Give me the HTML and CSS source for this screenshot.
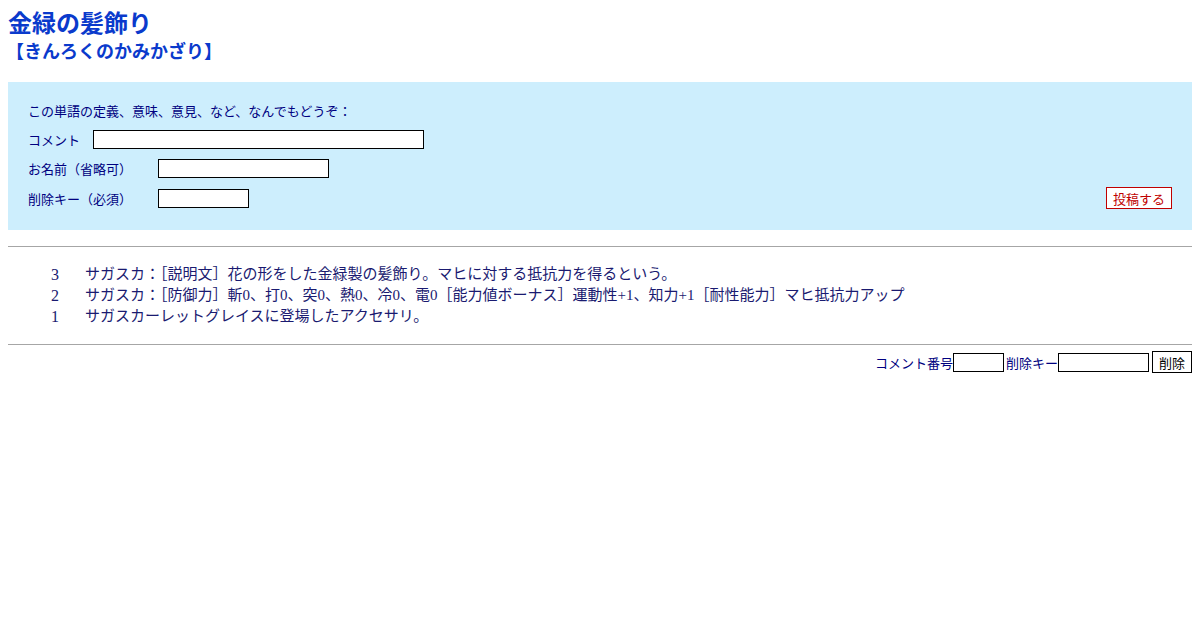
FILE: index.html
```html
<!DOCTYPE html>
<html lang="ja">
<head>
  <meta charset="UTF-8">
  <title>金緑の髪飾り</title>
  <link rel="stylesheet" href="styles.css">
</head>
<body>
  <h1 class="word">金緑の髪飾り</h1>
  <h2 class="yomi">【きんろくのかみかざり】</h2>

  <form class="post-box">
    <div class="post-lead">この単語の定義、意味、意見、など、なんでもどうぞ：</div>
    <div class="post-row">
      <label class="label-short">コメント</label>
      <input type="text" class="in-comment">
    </div>
    <div class="post-row">
      <label class="label">お名前（省略可）</label>
      <input type="text" class="in-name">
    </div>
    <div class="post-row post-last">
      <div class="post-row">
        <label class="label">削除キー（必須）</label>
        <input type="password" class="in-key">
      </div>
      <button type="button" class="btn-post">投稿する</button>
    </div>
  </form>

  <hr class="rule">

  <div class="comments">
    <div class="comment"><span class="num">3</span><span class="txt">サガスカ：［説明文］花の形をした金緑製の髪飾り。マヒに対する抵抗力を得るという。</span></div>
    <div class="comment"><span class="num">2</span><span class="txt">サガスカ：［防御力］斬0、打0、突0、熱0、冷0、電0［能力値ボーナス］運動性+1、知力+1［耐性能力］マヒ抵抗力アップ</span></div>
    <div class="comment"><span class="num">1</span><span class="txt">サガスカーレットグレイスに登場したアクセサリ。</span></div>
  </div>

  <hr class="rule rule-bottom">

  <form class="del-form">
    <span>コメント番号</span><input type="text" class="in-num"><span class="del-key">削除キー</span><input type="password" class="in-delkey"><button type="button" class="btn-del">削除</button>
  </form>
</body>
</html>
```

FILE: styles.css
```css
body {
  margin: 8px;
  background: #fff;
  color: #000080;
  font-family: "Liberation Serif", "Noto Sans CJK JP", serif;
}
.word {
  margin: 0;
  padding-top: 2px;
  font-family: "Liberation Sans", "Noto Sans CJK JP", sans-serif;
  font-size: 24px;
  line-height: 28px;
  color: #0a3acc;
}
.yomi {
  margin: 2px 0 0 -2px;
  font-family: "Liberation Sans", "Noto Sans CJK JP", sans-serif;
  font-size: 18px;
  line-height: 24px;
  color: #0a3acc;
}
.post-box {
  margin-top: 18px;
  background: #cdeefd;
  padding: 20px 20px 21px 20px;
  font-family: "Liberation Sans", "Noto Sans CJK JP", sans-serif;
  font-size: 13px;
  color: #000080;
}
.post-lead {
  line-height: 20px;
  margin-bottom: 7px;
}
.post-row {
  display: flex;
  align-items: center;
  height: 20px;
  margin-bottom: 9px;
}
.post-last {
  justify-content: space-between;
  margin-bottom: 0;
  height: 22px;
}
.post-last .post-row {
  margin-bottom: 0;
}
.label-short {
  margin-right: 13px;
}
.label {
  width: 130px;
}
.post-box input {
  box-sizing: border-box;
  height: 19px;
  border: 1px solid #000;
  background: #fff;
  padding: 0 2px;
  margin: 0;
}
.in-comment { width: 331px; }
.in-name { width: 171px; }
.in-key { width: 91px; }
.btn-post {
  box-sizing: border-box;
  height: 22px;
  padding: 0 6px;
  border: 1px solid #c00000;
  background: #fff;
  color: #c00000;
  font-family: "Liberation Sans", "Noto Sans CJK JP", sans-serif;
  font-size: 13px;
}
.rule {
  margin: 16px 0 0 0;
  border: none;
  border-top: 1px solid #a6a6a6;
  height: 0;
}
.comments {
  padding: 17px 0 17px 43px;
  font-size: 15px;
  line-height: 21px;
  color: #1a1a70;
}
.comment {
  display: flex;
}
.num {
  width: 34px;
  font-size: 16px;
}
.rule-bottom {
  margin-top: 0;
}
.del-form {
  margin-top: 6px;
  display: flex;
  justify-content: flex-end;
  align-items: center;
  font-family: "Liberation Sans", "Noto Sans CJK JP", sans-serif;
  font-size: 13px;
  color: #000080;
}
.del-form input {
  box-sizing: border-box;
  height: 19px;
  border: 1px solid #000;
  margin: 0;
  padding: 0 2px;
}
.del-key {
  margin-left: 2px;
}
.in-num { width: 51px; }
.in-delkey { width: 91px; }
.btn-del {
  box-sizing: border-box;
  height: 22px;
  margin-left: 3px;
  padding: 0 6px;
  border: 1px solid #000;
  background: #fff;
  color: #000;
  font-family: "Liberation Sans", "Noto Sans CJK JP", sans-serif;
  font-size: 13px;
}
```
